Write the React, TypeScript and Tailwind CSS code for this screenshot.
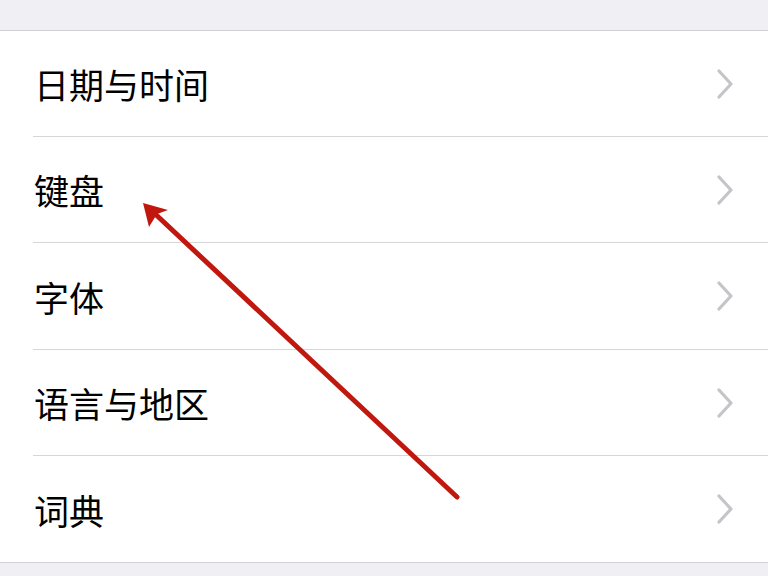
const items = [
  { label: '日期与时间', h: 'h-[106px]' },
  { label: '键盘', h: 'h-[106px]' },
  { label: '字体', h: 'h-[107px]' },
  { label: '语言与地区', h: 'h-[106px]' },
  { label: '词典', h: 'h-[106px]' },
]

function Chevron() {
  return (
    <svg width="18" height="30" viewBox="0 0 18 30" className="shrink-0">
      <path d="M3 2 L15 15 L3 28" fill="none" stroke="#c4c4c9" strokeWidth="3.2" strokeLinecap="round" strokeLinejoin="round" />
    </svg>
  )
}

export default function App() {
  return (
    <div className="relative w-[768px] h-[576px] overflow-hidden bg-[#efeff4] font-['Noto_Sans_CJK_SC',sans-serif]">
      <div className="h-[31px] border-b border-[#d1d1d6]" />
      <div className="bg-white border-b border-[#d1d1d6]">
        {items.map((item, i) => (
          <div key={item.label} className="pl-[33px]">
            <div
              className={
                i < items.length - 1
                  ? `${item.h} flex items-center justify-between pr-[34px] border-b border-[#d6d6da]`
                  : `${item.h} flex items-center justify-between pr-[34px]`
              }
            >
              <span className="text-[35px] leading-none text-black pl-[1px]">{item.label}</span>
              <Chevron />
            </div>
          </div>
        ))}
      </div>

      {/* red annotation arrow */}
      <svg className="absolute inset-0 pointer-events-none" width="768" height="576" viewBox="0 0 768 576">
        <line x1="457" y1="497" x2="152" y2="211" stroke="#c0180f" strokeWidth="5" strokeLinecap="round" />
        <path d="M143 203 L168 210 L157 214 L149 227 Z" fill="#c0180f" />
      </svg>
    </div>
  )
}
